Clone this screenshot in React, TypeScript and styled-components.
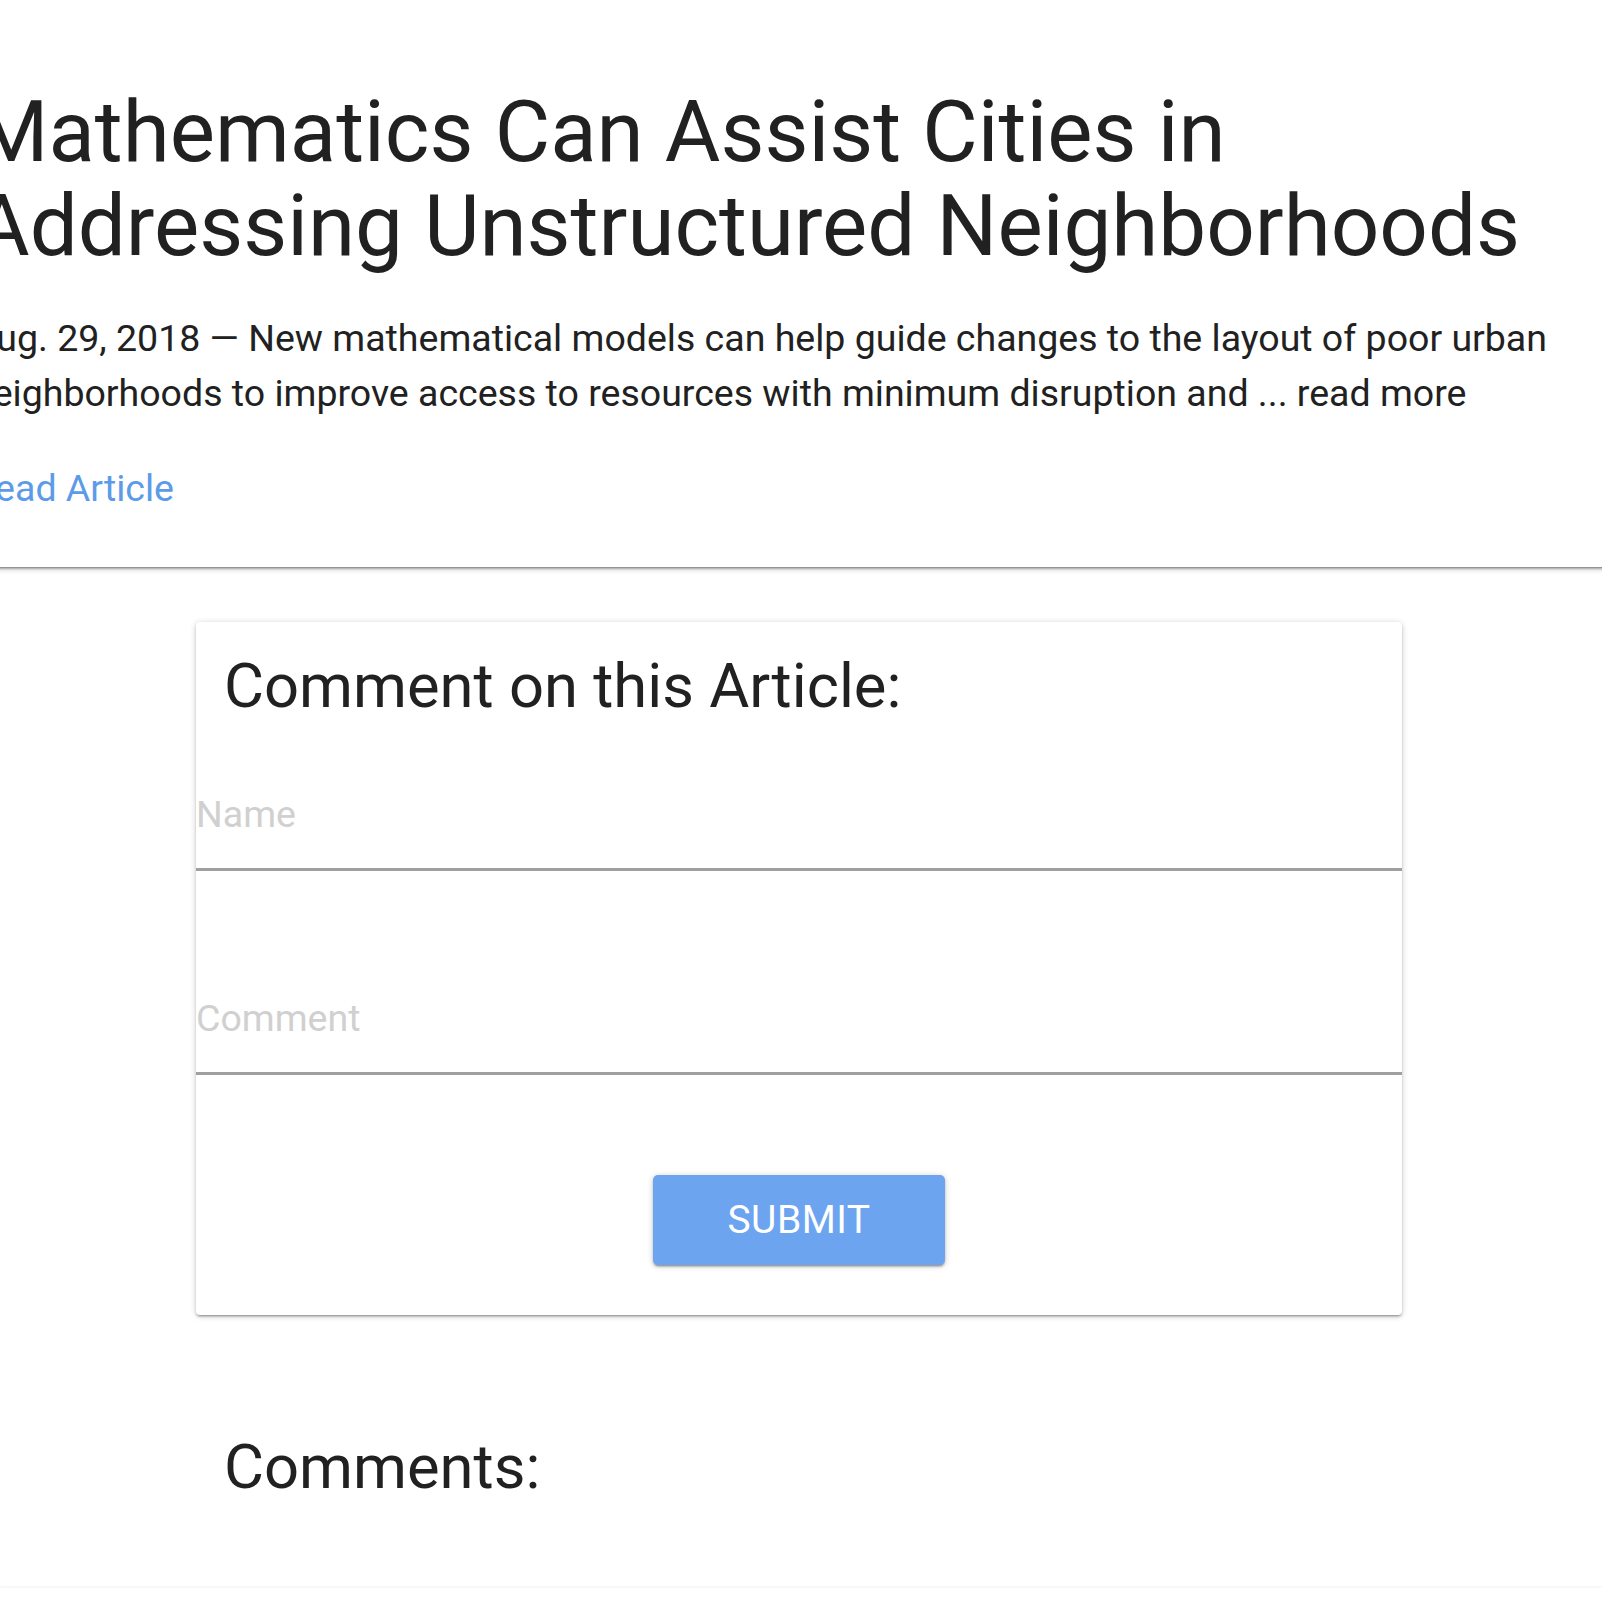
import * as React from 'react';
import styled, { createGlobalStyle } from 'styled-components';

const GlobalStyle = createGlobalStyle`
  html, body {
    margin: 0;
    padding: 0;
    background: #fff;
    font-family: Roboto, "Liberation Sans", Arial, sans-serif;
    color: rgba(0, 0, 0, 0.87);
    overflow: hidden;
  }
`;

const Page = styled.div`
  width: 1602px;
  height: 1601px;
  overflow: hidden;
`;

const ArticleCard = styled.section`
  background: #fff;
  margin-left: -28px;
  margin-right: -28px;
  padding: 85px 0 51px 0;
  box-shadow: 0 2px 2px 0 rgba(0, 0, 0, 0.24), 0 3px 1px -2px rgba(0, 0, 0, 0.14),
    0 2px 6px 0 rgba(0, 0, 0, 0.2);
`;

const Title = styled.h1`
  margin: 0 0 37px 2px;
  font-size: 85.3px;
  line-height: 94.3px;
  font-weight: 400;
  color: #212121;
`;

const Summary = styled.p`
  margin: 0 0 38px 0;
  font-size: 37.5px;
  line-height: 55.6px;
  color: #212121;
  max-width: 1640px;
`;

const ReadLink = styled.a`
  display: block;
  font-size: 37.5px;
  line-height: 56px;
  color: #5c9be8;
  text-decoration: none;
`;

const CommentCard = styled.section`
  width: 1206px;
  margin: 55px 0 0 196px;
  background: #fff;
  border-radius: 4px;
  padding: 30px 0 50px;
  box-shadow: 0 2px 2px 0 rgba(0, 0, 0, 0.18), 0 3px 1px -2px rgba(0, 0, 0, 0.14),
    0 1px 6px 0 rgba(0, 0, 0, 0.2);
  display: flex;
  flex-direction: column;
`;

const Heading = styled.h2`
  margin: 0;
  padding-left: 28px;
  font-size: 61.5px;
  line-height: 69.3px;
  font-weight: 400;
  color: #212121;
`;

const Field = styled.input<{ $gap: number }>`
  display: block;
  box-sizing: border-box;
  width: 100%;
  height: 112px;
  margin-top: ${p => p.$gap}px;
  padding: 0;
  border: none;
  border-bottom: 3px solid #a0a0a0;
  background: transparent;
  outline: none;
  font-family: inherit;
  font-size: 37.5px;
  color: #212121;
  &::placeholder {
    color: #d0d0d0;
  }
`;

const SubmitButton = styled.button`
  align-self: center;
  width: 292px;
  height: 90px;
  margin-top: 100px;
  border: none;
  border-radius: 5px;
  background: #6ca4ef;
  color: #fff;
  font-family: inherit;
  font-size: 39px;
  letter-spacing: 0.5px;
  text-transform: uppercase;
  box-shadow: 0 2px 2px 0 rgba(0, 0, 0, 0.2), 0 3px 1px -2px rgba(0, 0, 0, 0.14),
    0 1px 6px 0 rgba(0, 0, 0, 0.2);
  cursor: pointer;
`;

const CommentsSection = styled.div`
  width: 1206px;
  margin: 118px 0 0 196px;
`;

const NextCard = styled.div`
  margin-top: 86px;
  height: 60px;
  background: #fff;
  box-shadow: 0 -1px 3px rgba(0, 0, 0, 0.06);
`;

const App = () => {
  return (
    <>
      <GlobalStyle />
      <Page>
        <ArticleCard>
          <Title>
            Mathematics Can Assist Cities in
            <br />
            Addressing Unstructured Neighborhoods
          </Title>
          <Summary>
            Aug. 29, 2018 — New mathematical models can help guide changes to the layout of poor urban
            neighborhoods to improve access to resources with minimum disruption and ... read more
          </Summary>
          <ReadLink href="#">Read Article</ReadLink>
        </ArticleCard>

        <CommentCard>
          <Heading>Comment on this Article:</Heading>
          <Field $gap={38} type="text" placeholder="Name" />
          <Field $gap={92} type="text" placeholder="Comment" />
          <SubmitButton type="button">Submit</SubmitButton>
        </CommentCard>

        <CommentsSection>
          <Heading>Comments:</Heading>
        </CommentsSection>
        <NextCard />
      </Page>
    </>
  );
};

export default App;
